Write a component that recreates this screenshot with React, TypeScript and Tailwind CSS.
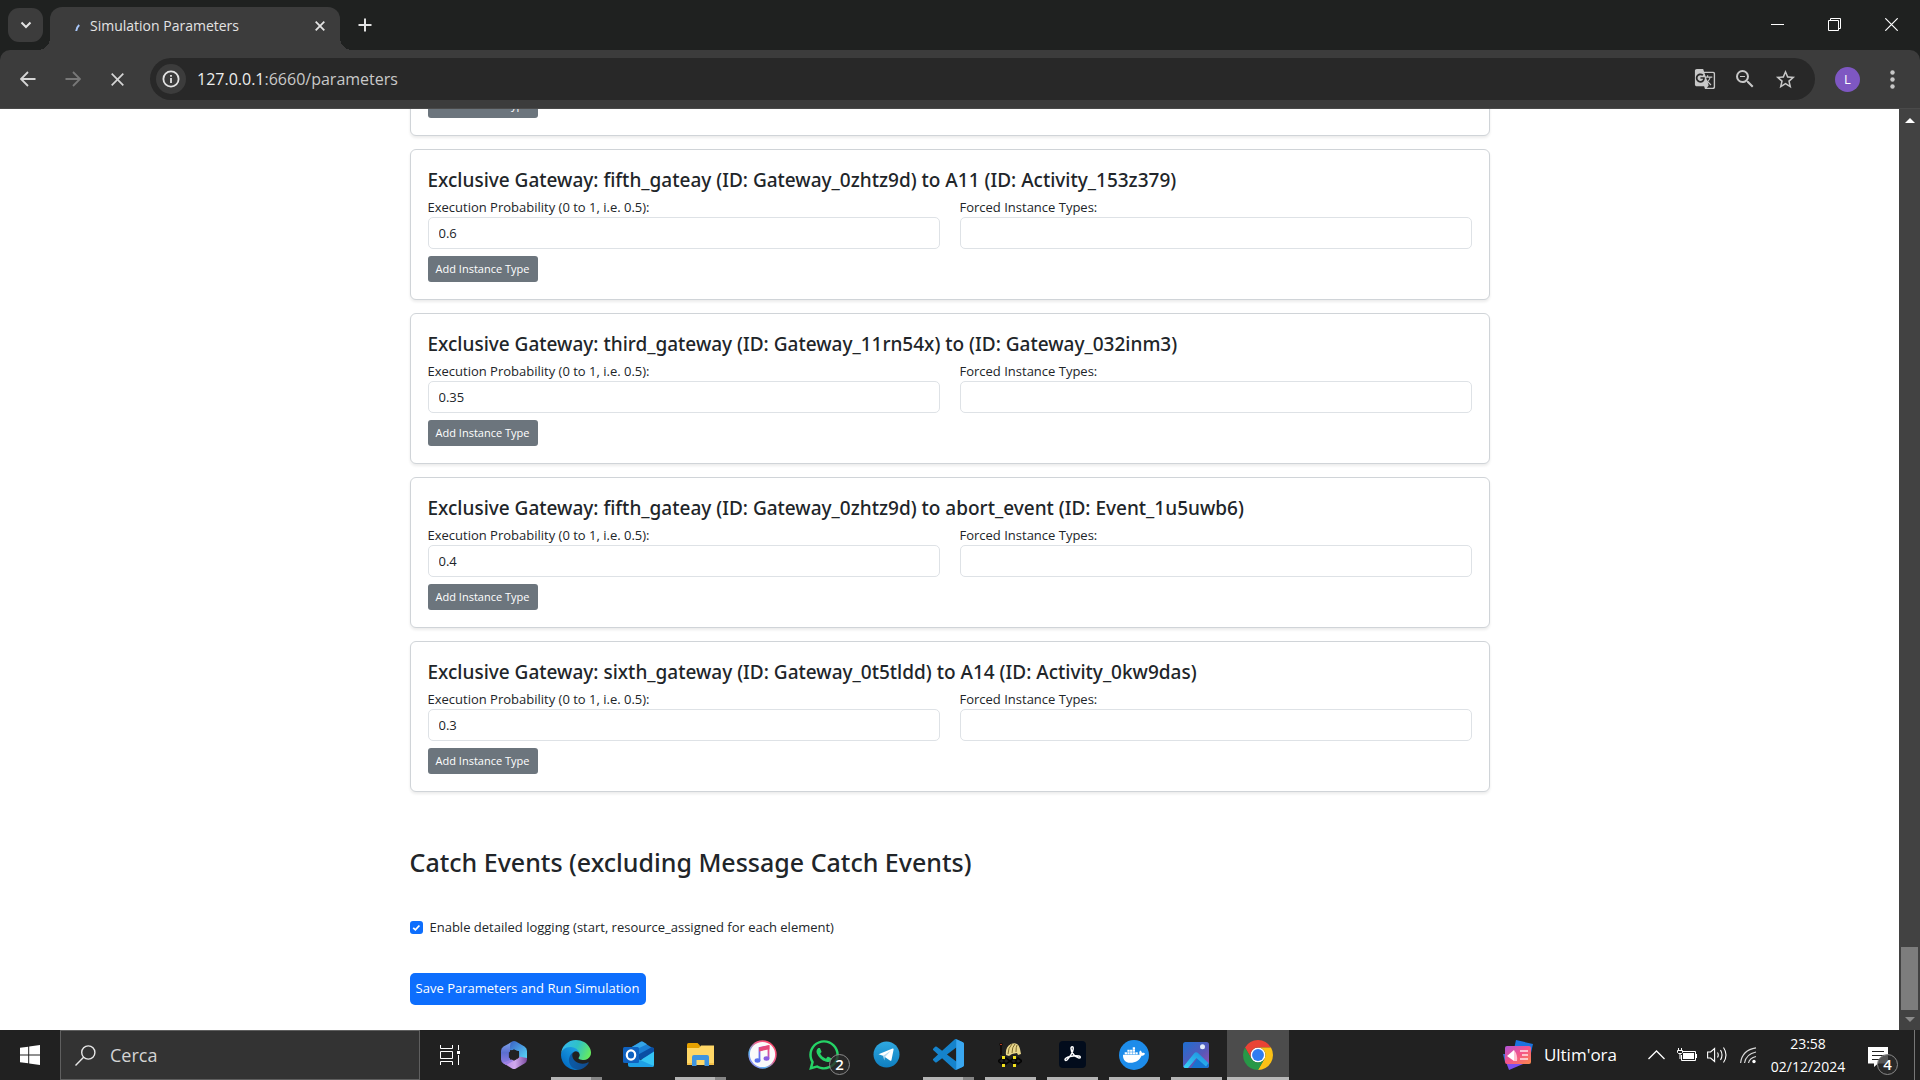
import React from "react";
import { FaWhatsapp, FaDocker } from "react-icons/fa";
import { MdGTranslate, MdZoomOut, MdStarBorder } from "react-icons/md";

type Gateway = { title: string; probability: string };

const gateways: Gateway[] = [
  { title: "Exclusive Gateway: fifth_gateay (ID: Gateway_0zhtz9d) to A11 (ID: Activity_153z379)", probability: "0.6" },
  { title: "Exclusive Gateway: third_gateway (ID: Gateway_11rn54x) to (ID: Gateway_032inm3)", probability: "0.35" },
  { title: "Exclusive Gateway: fifth_gateay (ID: Gateway_0zhtz9d) to abort_event (ID: Event_1u5uwb6)", probability: "0.4" },
  { title: "Exclusive Gateway: sixth_gateway (ID: Gateway_0t5tldd) to A14 (ID: Activity_0kw9das)", probability: "0.3" },
];

function AddButton() {
  return (
    <button className="block h-[26px] w-[110px] whitespace-nowrap rounded-[3px] bg-[#6c757d] text-center text-[11px] leading-[26px] text-white">
      Add Instance Type
    </button>
  );
}

function GatewayCard({ gateway, index }: { gateway: Gateway; index: number }) {
  return (
    <section className="rounded-[6px] border border-[#d0d4d8] bg-white px-[17px] pt-4 pb-[17px] shadow-[0_2px_3px_rgba(0,0,0,0.08)]">
      <h5 className="mb-1 whitespace-nowrap font-['Noto_Sans',sans-serif] text-[19px] font-medium leading-7">{gateway.title}</h5>
      <div className="grid grid-cols-2 gap-5">
        <div>
          <label htmlFor={`prob-${index}`} className="block leading-[19px]">Execution Probability (0 to 1, i.e. 0.5):</label>
          <input id={`prob-${index}`} defaultValue={gateway.probability} className="block h-8 w-full rounded-[5px] border border-[#dee2e6] bg-white px-2.5" />
        </div>
        <div>
          <label htmlFor={`forced-${index}`} className="block leading-[19px]">Forced Instance Types:</label>
          <input id={`forced-${index}`} className="block h-8 w-full rounded-[5px] border border-[#dee2e6] bg-white px-2.5" />
        </div>
      </div>
      <div className="mt-[7px]">
        <AddButton />
      </div>
    </section>
  );
}

function TabStrip() {
  return (
    <div className="flex h-[50px] items-end bg-[#1f2120] pl-2">
      <button aria-label="Search tabs" className="mb-2 flex h-[34px] w-[35px] items-center justify-center rounded-[11px] bg-[#3c3c3c]">
        <svg width="12" height="8" viewBox="0 0 12 8" fill="none" stroke="#e3e3e3" strokeWidth="2"><path d="M1.500 1.500 6 6l4.500-4.500" /></svg>
      </button>
      <span className="-ml-[5px] h-3 w-3 bg-[radial-gradient(circle_at_0_0,transparent_12px,#3c3c3c_12px)]" />
      <div className="flex h-[43px] w-[290px] items-center rounded-t-[12px] bg-[#3c3c3c] pr-[13px] pb-1.5 pl-[25px]">
        <svg className="mt-1" width="6" height="8" viewBox="0 0 6 8"><path d="M1.200 7 C1.500 4.500 2.500 2.500 4.200 1" stroke="#a8c7fa" strokeWidth="2" fill="none" /></svg>
        <span className="ml-[9px] flex-1 whitespace-nowrap text-[14px] text-[#e3e3e3]">Simulation Parameters</span>
        <button aria-label="Close tab" className="p-0.5">
          <svg width="10" height="10" viewBox="0 0 10 10" stroke="#e3e3e3" strokeWidth="1.800"><path d="M.7.7l8.600 8.600M9.300.7.7 9.300" /></svg>
        </button>
      </div>
      <span className="h-3 w-3 bg-[radial-gradient(circle_at_100%_0,transparent_12px,#3c3c3c_12px)]" />
      <button aria-label="New tab" className="mb-[18px] ml-1.5">
        <svg width="14" height="14" viewBox="0 0 14 14" stroke="#e3e3e3" strokeWidth="2"><path d="M7 .5v13M.5 7h13" /></svg>
      </button>
      <div className="mb-[19px] mr-[22px] ml-auto flex items-center gap-11">
        <button aria-label="Minimize"><svg width="13" height="13" viewBox="0 0 13 13" stroke="#fff"><path d="M0 6.500h13" /></svg></button>
        <button aria-label="Restore"><svg width="13" height="13" viewBox="0 0 13 13" stroke="#fff" fill="none"><path d="M.5 2.500h10v10H.5zM2.500 2.500v-2h10v10h-2" /></svg></button>
        <button aria-label="Close"><svg width="13" height="13" viewBox="0 0 13 13" stroke="#fff" strokeWidth="1.200"><path d="M.3.3l12.400 12.400M12.700.3.3 12.700" /></svg></button>
      </div>
    </div>
  );
}

function Toolbar() {
  return (
    <div className="bg-[#1f2120]">
      <div className="flex h-[59px] items-center rounded-t-[10px] border-b border-[#4a4a4a] bg-[#3c3c3c] pr-[25px] pl-5">
        <button aria-label="Back"><svg width="16" height="16" viewBox="0 0 16 16" fill="none" stroke="#d5d5d5" strokeWidth="1.800"><path d="M15.500 8H1.500M8 1 1 8l7 7" /></svg></button>
        <button aria-label="Forward" className="ml-[29px]"><svg width="16" height="16" viewBox="0 0 16 16" fill="none" stroke="#787878" strokeWidth="1.800"><path d="M.5 8h14M8 1l7 7-7 7" /></svg></button>
        <button aria-label="Stop" className="ml-[30px]"><svg width="13" height="13" viewBox="0 0 13 13" stroke="#d5d5d5" strokeWidth="1.700"><path d="M.7.7l11.600 11.600M12.300.7.7 12.300" /></svg></button>
        <div className="ml-[26px] flex h-[42px] flex-1 items-center rounded-full bg-[#282828] pr-2.5 pl-1.5">
          <button aria-label="Site information" className="flex h-[30px] w-[30px] items-center justify-center rounded-full bg-[#3c3c3c]">
            <svg width="18" height="18" viewBox="0 0 18 18" fill="none" stroke="#e3e3e3" strokeWidth="1.800"><circle cx="9" cy="9" r="7.600" /><path d="M9 8v5M9 5v1.800" /></svg>
          </button>
          <span className="ml-[11px] flex-1 text-[16px] text-[#c9c9c9]"><span className="text-[#ededed]">127.0.0.1</span>:6660/parameters</span>
          <div className="flex items-center text-[#c7c7c7]">
            <button aria-label="Translate" className="flex w-10 justify-center"><MdGTranslate size={22} /></button>
            <button aria-label="Zoom" className="flex w-10 justify-center"><MdZoomOut size={24} /></button>
            <button aria-label="Bookmark" className="flex w-10 justify-center"><MdStarBorder size={23} /></button>
          </div>
        </div>
        <button aria-label="Profile" className="ml-5 h-[25px] w-[25px] rounded-full bg-[#7e57c2] text-center text-[13px] leading-[25px] text-white">L</button>
        <button aria-label="Menu" className="ml-[30px]"><svg width="5" height="19" viewBox="0 0 5 19" fill="#c7c7c7"><circle cx="2.500" cy="2.500" r="2.200" /><circle cx="2.500" cy="9.500" r="2.200" /><circle cx="2.500" cy="16.500" r="2.200" /></svg></button>
      </div>
    </div>
  );
}

function Page() {
  return (
    <div className="flex min-h-0 flex-1 bg-white">
      <main className="min-w-0 flex-1 overflow-hidden text-[13px] text-[#212529]">
        <div className="mx-auto max-w-[1080px]">
          <div className="flex flex-col gap-[13px]">
            <section className="-mt-[18px] rounded-[6px] border border-[#d0d4d8] bg-white px-[17px] pb-[17px] shadow-[0_2px_3px_rgba(0,0,0,0.08)]">
              <AddButton />
            </section>
            {gateways.map((g, i) => <GatewayCard key={g.title} gateway={g} index={i} />)}
          </div>
          <h2 className="mt-[52px] font-['Noto_Sans',sans-serif] text-[25px] font-medium leading-9">Catch Events (excluding Message Catch Events)</h2>
          <div className="mt-[38px] flex items-center">
            <input id="logging" type="checkbox" defaultChecked className="h-[13px] w-[13px] appearance-none rounded-[3px] bg-[#0d6efd]" />
            <svg className="pointer-events-none -ml-[11px] h-[9px] w-[9px]" viewBox="0 0 9 9" fill="none" stroke="#fff" strokeWidth="1.800"><path d="m1.200 4.800 2.200 2 4-4.300" /></svg>
            <label htmlFor="logging" className="ml-[9px] leading-[19px]">Enable detailed logging (start, resource_assigned for each element)</label>
          </div>
          <button className="mt-9 block h-8 w-[236px] whitespace-nowrap rounded-[5px] bg-[#0d6efd] text-center text-white">Save Parameters and Run Simulation</button>
        </div>
      </main>
      <div className="flex w-[21px] flex-col items-center bg-[#424242] pt-[9px] pb-2">
        <svg width="10" height="5" viewBox="0 0 10 5" fill="#fff"><path d="M5 0l5 5H0z" /></svg>
        <div className="mt-auto mb-[7px] h-[63px] w-[17px] bg-[#7d7d7d]" />
        <svg width="10" height="5" viewBox="0 0 10 5" fill="#8a8a8a"><path d="M5 5 0 0h10z" /></svg>
      </div>
    </div>
  );
}

function M365Icon() {
  return (
    <svg width="26" height="28" viewBox="0 0 26 28">
      <defs>
        <linearGradient id="ma" x1="0" y1="0" x2="0" y2="1"><stop offset="0" stopColor="#7fa6ea" /><stop offset=".5" stopColor="#5b6ed0" /><stop offset="1" stopColor="#8d7be0" /></linearGradient>
        <linearGradient id="mb" x1="0" y1="0" x2="1" y2="1"><stop offset="0" stopColor="#3a62c4" /><stop offset=".5" stopColor="#4a9be0" /><stop offset="1" stopColor="#58daf8" /></linearGradient>
        <linearGradient id="mc" x1="0" y1="0" x2="1" y2="0"><stop offset="0" stopColor="#b78ae6" /><stop offset=".5" stopColor="#d0a9ee" /><stop offset="1" stopColor="#7a4a9e" /></linearGradient>
      </defs>
      <path d="M11 .8 2.500 5.500Q0 7 0 10v8.500Q0 21 2.500 22.500L9 19V10Z" fill="url(#ma)" />
      <path d="M11 .6Q13-.4 15 .6L23.500 5.500Q26 7 26 10v8l-8-2V10L9 9V5Q9 2 11 .6Z" fill="url(#mb)" />
      <path d="M2 22 18 15.500l8 1.500v1.500Q26 21 23.500 22.500L15 27.400q-2 1-4 0Z" fill="url(#mc)" />
      <path d="M2.500 22.500 9 18.500l4 1L5 24Z" fill="#9a80e4" />
      <path d="M13 8.800l4.600 2.600v5.200L13 19.200l-4.600-2.600v-5.200z" fill="#222" stroke="#222" strokeLinejoin="round" />
    </svg>
  );
}

function EdgeIcon() {
  return (
    <svg width="30" height="30" viewBox="0 0 256 256">
      <defs>
        <linearGradient id="ea" x1=".2" y1=".5" x2="1" y2=".5"><stop offset="0" stopColor="#0c59a4" /><stop offset="1" stopColor="#114a8b" /></linearGradient>
        <linearGradient id="eb" x1=".8" y1=".2" x2=".2" y2="1"><stop offset="0" stopColor="#1b9de2" /><stop offset="1" stopColor="#0067c0" /></linearGradient>
        <linearGradient id="ec" x1="0" y1=".3" x2="1" y2=".6"><stop offset="0" stopColor="#35b8f1" /><stop offset=".5" stopColor="#2fc2c6" /><stop offset="1" stopColor="#66eb5e" /></linearGradient>
      </defs>
      <path transform="translate(-4.630 -4.920)" fill="url(#ea)" d="M235.680 195.460a93.730 93.730 0 0 1-10.540 4.710 101.870 101.870 0 0 1-35.900 6.460c-47.320 0-88.540-32.550-88.540-74.320A31.480 31.480 0 0 1 117.130 105c-42.800 1.800-53.800 46.400-53.800 72.530 0 73.880 68.090 81.370 82.760 81.370 7.910 0 19.840-2.300 27-4.560l1.310-.44A128.340 128.340 0 0 0 241 201.100a4 4 0 0 0-5.320-5.640Z" />
      <path fill="url(#eb)" d="M105.730 241.290a79.200 79.200 0 0 1-22.740-21.340 80.720 80.720 0 0 1 29.490-120c3.120-1.470 8.450-4.130 15.540-4a32.350 32.350 0 0 1 25.690 13 31.880 31.880 0 0 1 6.360 18.660c0-.21 24.460-79.600-80-79.600-43.900 0-80 41.660-80 78.210a130.150 130.150 0 0 0 12.110 56 128 128 0 0 0 156.380 67.110 75.550 75.550 0 0 1-62.780-8Z" />
      <path fill="url(#ec)" d="M152.330 148.860c-.81 1.050-3.300 2.500-3.300 5.660 0 2.610 1.700 5.120 4.720 7.230 14.380 10 41.490 8.680 41.560 8.680a59.560 59.560 0 0 0 30.270-8.350A61.380 61.380 0 0 0 256 109.120c.26-22.410-8-37.310-11.340-43.910C223.460 23.790 177.720 0 128 0A128 128 0 0 0 0 126.200c.48-36.540 36.800-66.050 80-66.050 3.500 0 23.460.34 42 10.070 16.340 8.580 24.900 18.940 30.850 29.210 6.180 10.670 7.280 24.150 7.280 29.520s-2.740 13.330-7.800 19.910Z" />
    </svg>
  );
}

function OutlookIcon() {
  return (
    <svg width="31" height="27" viewBox="0 0 31 27">
      <path d="M7 7 17.500.8q1-.6 2 0L31 8v15L8 12z" fill="#1b7fd4" />
      <path d="M9 6 18 .8q1-.5 2 0l4 2.400L12 9z" fill="#34a5e8" />
      <path d="M31 7v5L15 20l-6-3L29 6z" fill="#0a4ea3" />
      <path d="M31 10.500V24q0 2-2 2H7z" fill="#35c5f5" />
      <path d="M5 16v8q0 2 2 2h22q1 0 1.700-1L15 18z" fill="#1ea0e6" />
      <rect x="0" y="6" width="16" height="16" rx="1.500" fill="#0f62c0" />
      <ellipse cx="8" cy="14" rx="4.200" ry="4.600" fill="none" stroke="#fff" strokeWidth="2.200" />
    </svg>
  );
}

function ExplorerIcon() {
  return (
    <svg width="29" height="26" viewBox="0 0 29 26">
      <path d="M1 2.500Q1 1 2.500 1h9l2.500 2.500V8H1z" fill="#e6a100" />
      <path d="M1 6h12l2-2.500h13V23H1z" fill="#ffd766" />
      <path d="M1 21h5v2H1zM23 21h5v2h-5z" fill="#f3c04a" />
      <path d="M6 24V15q0-2 2-2h13q2 0 2 2v9h-4.500v-6h-8v6z" fill="#3f95e0" />
    </svg>
  );
}

function MusicIcon() {
  return (
    <svg width="29" height="29" viewBox="0 0 29 29">
      <defs>
        <linearGradient id="mu" x1="0" y1="1" x2="1" y2="0"><stop offset="0" stopColor="#b26bf0" /><stop offset=".3" stopColor="#5fb8f2" /><stop offset=".6" stopColor="#f2618e" /><stop offset="1" stopColor="#fb3f5e" /></linearGradient>
        <linearGradient id="mn" x1="0" y1="1" x2="1" y2="0"><stop offset="0" stopColor="#4a7df0" /><stop offset=".5" stopColor="#a757d8" /><stop offset="1" stopColor="#fb4a68" /></linearGradient>
      </defs>
      <circle cx="14.500" cy="14.500" r="13.400" fill="#fafafa" stroke="url(#mu)" strokeWidth="1.600" />
      <path d="M11.500 20.500V8l9-2v12.500" fill="none" stroke="url(#mn)" strokeWidth="1.800" />
      <path d="M11 7.500 21.400 5.200v4L11 11.500z" fill="#e5487a" />
      <ellipse cx="9.500" cy="20.500" rx="2.900" ry="2.200" fill="#5a72ec" />
      <ellipse cx="18.500" cy="18.500" rx="2.900" ry="2.200" fill="#8a5ce0" />
    </svg>
  );
}

function CountBadge({ value }: { value: string }) {
  return (
    <span className="block h-[21px] w-[21px] rounded-full border border-[#8a8a8a] bg-[#2b2b2bcc] text-center text-[15px] font-semibold leading-[19px] text-white">
      {value}
    </span>
  );
}

function WhatsAppIcon() {
  return (
    <span className="relative block">
      <FaWhatsapp size={34} color="#25d366" />
      <span className="absolute top-4 left-[22px]"><CountBadge value="2" /></span>
    </span>
  );
}

function TelegramIcon() {
  return (
    <svg width="27" height="27" viewBox="0 0 27 27">
      <defs><linearGradient id="tg" x1="0" y1="0" x2="0" y2="1"><stop offset="0" stopColor="#2fa8e0" /><stop offset="1" stopColor="#0f7fc0" /></linearGradient></defs>
      <circle cx="13.500" cy="13.500" r="13" fill="url(#tg)" />
      <path d="M5.500 13.300 19.600 7.600q1.100-.3 1 1L18.500 19q-.4 1.300-1.600.6L10 14.800z" fill="#fff" />
      <path d="m10 14.800 7.800-5-6 6.400-.5 3.300z" fill="#b9dcf2" />
    </svg>
  );
}

function VsCodeIcon() {
  return (
    <svg width="31" height="31" viewBox="0 0 24 24">
      <path fill="#1583cc" d="M23.150 2.587L18.210.21a1.494 1.494 0 0 0-1.705.29l-9.460 8.630-4.120-3.128a.999.999 0 0 0-1.276.057L.327 7.261A1 1 0 0 0 .326 8.740L3.899 12 .326 15.260a1 1 0 0 0 .001 1.479L1.650 17.940a.999.999 0 0 0 1.276.057l4.120-3.128 9.460 8.630a1.492 1.492 0 0 0 1.704.29l4.942-2.377A1.500 1.500 0 0 0 24 20.060V3.939a1.500 1.500 0 0 0-.85-1.352zm-5.146 14.861L10.826 12l7.178-5.448v10.896z" />
      <path fill="#3aa7f0" d="M18 .2 23.150 2.600A1.500 1.500 0 0 1 24 4v16a1.500 1.500 0 0 1-.85 1.400L18 23.800z" />
    </svg>
  );
}

function HelmetIcon() {
  return (
    <svg width="24" height="26" viewBox="0 0 24 26">
      <path d="M1 2q2-2 4 0l-1 2v9H2V4z" fill="#120c0a" />
      <path d="M2 2.500h2" stroke="#b03a20" />
      <path d="M8 13Q7 5 13 2q7-3 9 5l1 5-3 1-1-2-5 1-3 2z" fill="#e8d68c" />
      <path d="M10 12q0-6 4-10M14 11q0-6 3-9M18 10q0-5 1-7" stroke="#7d6a2c" fill="none" />
      <path d="M0 19l4-3 2 2 2-2 4 3 4-3 2 2 2-2 4 3-4 3-2-2-2 2-4-3-4 3-2-2-2 2z" fill="none" stroke="#050505" strokeWidth="1.600" />
      <path d="M4 14h3v3H4zM15 14h3v3h-3zM4 22h3v3H4zM15 22h3v3h-3z" fill="#f2e21c" />
    </svg>
  );
}

function AcrobatIcon() {
  return (
    <svg width="27" height="27" viewBox="0 0 27 27">
      <rect width="27" height="27" rx="4" fill="#020c1c" />
      <path d="M12.500 6q2-1 1.700 2-.7 5-6.200 11-1.500 1-2-.3c0-2.500 9-4.700 14-3.700 2 .6 1.500 2.300-.2 2C16 16.500 12 11 12 7.500q0-1 .5-1.500z" fill="none" stroke="#fff" strokeWidth="1.500" />
    </svg>
  );
}

function DockerIcon() {
  return (
    <span className="flex h-[30px] w-[30px] items-center justify-center rounded-full bg-[#1d8cea]">
      <FaDocker size={22} color="#fff" />
    </span>
  );
}

function PhotosIcon() {
  return (
    <svg width="26" height="26" viewBox="0 0 26 26">
      <defs>
        <linearGradient id="pa" x1="0" y1="0" x2="1" y2="1"><stop offset="0" stopColor="#1d6fd0" /><stop offset=".6" stopColor="#5a57b8" /><stop offset="1" stopColor="#9a50b0" /></linearGradient>
        <linearGradient id="pb" x1="0" y1="1" x2="1" y2="0"><stop offset="0" stopColor="#38d6f8" /><stop offset="1" stopColor="#1a86dc" /></linearGradient>
      </defs>
      <rect width="26" height="26" rx="2.500" fill="url(#pa)" />
      <path d="M8 26 16 14l10 8v1.500Q26 26 23.500 26z" fill="#1673cf" />
      <path d="M.5 24.500 11 11.500q2-2.300 4.300-.3L25.500 21 23 24.500 13.500 16 5 26H2.500Q1 26 .5 24.500z" fill="url(#pb)" />
      <circle cx="19.500" cy="4.800" r="2.500" fill="#e4ecfb" />
    </svg>
  );
}

function ChromeIcon() {
  return (
    <svg width="30" height="30" viewBox="0 0 48 48">
      <circle cx="24" cy="24" r="12" fill="#fff" />
      <path fill="#ea4335" d="M24 12H44.780a24 24 0 0 0-41.560 0L13.610 30A12 12 0 0 1 24 12Z" />
      <path fill="#fbc116" d="M34.390 30 24 48A24 24 0 0 0 44.780 12H24A12 12 0 0 1 34.390 30Z" />
      <path fill="#279847" d="M13.610 30 3.220 12A24 24 0 0 0 24 48L34.390 30a12 12 0 0 1-20.780 0Z" />
      <circle cx="24" cy="24" r="9.500" fill="#2f7cf0" />
    </svg>
  );
}

type TaskApp = { name: string; icon: React.ReactNode; state: "idle" | "open" | "multi" | "active" };

const apps: TaskApp[] = [
  { name: "Microsoft 365", icon: <M365Icon />, state: "idle" },
  { name: "Edge", icon: <EdgeIcon />, state: "multi" },
  { name: "Outlook", icon: <OutlookIcon />, state: "idle" },
  { name: "Explorer", icon: <ExplorerIcon />, state: "multi" },
  { name: "Music", icon: <MusicIcon />, state: "idle" },
  { name: "WhatsApp", icon: <WhatsAppIcon />, state: "idle" },
  { name: "Telegram", icon: <TelegramIcon />, state: "idle" },
  { name: "Visual Studio Code", icon: <VsCodeIcon />, state: "multi" },
  { name: "Process tool", icon: <HelmetIcon />, state: "open" },
  { name: "Acrobat", icon: <AcrobatIcon />, state: "open" },
  { name: "Docker", icon: <DockerIcon />, state: "open" },
  { name: "Photos", icon: <PhotosIcon />, state: "open" },
  { name: "Chrome", icon: <ChromeIcon />, state: "active" },
];

function AppButton({ app }: { app: TaskApp }) {
  return (
    <button aria-label={app.name} className={app.state === "active" ? "flex h-full w-[62px] flex-col items-center bg-[#4c4c4c]" : "flex h-full w-[62px] flex-col items-center"}>
      <span className="flex flex-1 items-center justify-center pt-0.5">{app.icon}</span>
      {app.state === "multi" && (
        <span className="flex h-[3px] w-[51px]"><span className="flex-1 bg-[#b4b4b4]" /><span className="w-[11px] bg-[#858585]" /></span>
      )}
      {app.state === "open" && <span className="h-[3px] w-[51px] bg-[#b4b4b4]" />}
      {app.state === "active" && <span className="h-[3px] w-full bg-[#b8b8b8]" />}
      {app.state === "idle" && <span className="h-[3px]" />}
    </button>
  );
}

function NewsIcon() {
  return (
    <svg width="30" height="30" viewBox="0 0 30 30">
      <defs><linearGradient id="nw" x1="0" y1="0" x2="1" y2="1"><stop offset="0" stopColor="#b053d8" /><stop offset=".5" stopColor="#f4558a" /><stop offset="1" stopColor="#fb8a4a" /></linearGradient></defs>
      <path d="m13 0 17 4-4 18-17-4z" fill="#1a73e0" />
      <path d="M3 22h22l-19 8z" fill="#7b4ff0" />
      <path d="M0 14h3v8H2z" fill="#3a6fd0" />
      <rect x="2" y="6" width="26" height="18" rx="2" fill="url(#nw)" />
      <path d="M4 16l7-6v11z" fill="#fff" />
      <path d="M11 10q4 5 3 11l-3 0z" fill="#ffc3d4" />
      <path d="M17 11h8M19 15h6M17 19h8" stroke="#ffe6ea" strokeWidth="1.400" />
    </svg>
  );
}

function Taskbar() {
  return (
    <footer className="flex h-[50px] shrink-0 items-stretch bg-[#212121] text-white">
      <button aria-label="Start" className="flex w-[60px] items-center justify-center">
        <svg width="20" height="20" viewBox="0 0 20 20" fill="#fff"><path d="M0 2.800 8.200 1.700v7.800H0zM9.200 1.500 20 0v9.500H9.200zM0 10.500h8.200v7.800L0 17.200zM9.200 10.500H20V20L9.200 18.500z" /></svg>
      </button>
      <label className="flex w-[360px] items-center border border-[#5f5f5f] bg-[#333] pl-3.5">
        <svg width="21" height="21" viewBox="0 0 21 21" fill="none" stroke="#e8e8e8" strokeWidth="1.400"><circle cx="13.300" cy="7.500" r="6.600" /><path d="M8.600 12.200.5 20.400" /></svg>
        <input aria-label="Cerca" placeholder="Cerca" className="ml-3.5 w-[250px] bg-transparent text-[18px] placeholder:text-[#d4d4d4]" />
      </label>
      <button aria-label="Task view" className="flex w-[63px] items-center justify-center pr-[3px]">
        <svg width="21" height="20" viewBox="0 0 21 20" fill="none" stroke="#fff"><path d="M.5 0v3.500h12V0M.5 20v-3.500h12V20M.5 6.500h12v7H.5zM18.500 0v5M18.500 10v10" /><rect x="17" y="6" width="3" height="3" fill="#fff" stroke="none" /></svg>
      </button>
      <nav className="flex">{apps.map((a) => <AppButton key={a.name} app={a} />)}</nav>
      <div className="ml-auto flex items-center">
        <button className="flex items-center gap-[11px] text-[17px]"><NewsIcon />Ultim'ora</button>
        <button aria-label="Hidden icons" className="ml-[31px]"><svg width="17" height="10" viewBox="0 0 17 10" fill="none" stroke="#fff" strokeWidth="1.300"><path d="m.5 9 8-8 8 8" /></svg></button>
        <svg className="ml-3" width="20" height="14" viewBox="0 0 20 14" fill="none" stroke="#fff"><path d="M6 3.500h12.500v9h-14V7" /><rect x="6" y="5" width="11" height="6" fill="#fff" stroke="none" /><path d="M19.500 6v4M1.500 0v2M4.500 0v2M.5 2.500h5v2l-1 1h-3l-1-1zM3 6v5" /></svg>
        <svg className="ml-2.5" width="21" height="18" viewBox="0 0 21 18" fill="none" stroke="#fff" strokeWidth="1.100"><path d="M.6 6v6h3l4 3.500v-13L3.600 6zM10.500 6.500q1.500 2.500 0 5M13.500 4q3 5 0 10M16.500 1.500q5 7.500 0 15" /></svg>
        <svg className="ml-3" width="17" height="17" viewBox="0 0 17 17" fill="none" stroke="#d8d8d8" strokeWidth="1.200"><path d="M.6 16Q2 3 16 .8M4.500 16Q6 7 16 5M8.500 16Q9.500 11 16 9.500" /><circle cx="14" cy="14.500" r="1.700" fill="#fff" stroke="none" /></svg>
        <div className="ml-3 w-[78px] text-center text-[14px] leading-[23px]"><div>23:58</div><div>02/12/2024</div></div>
        <button aria-label="Notifications" className="relative ml-[21px] h-[30px] w-[30px]">
          <svg className="mt-[5px]" width="20" height="21" viewBox="0 0 20 21"><path d="M0 0h20v16.500H10L6 20v-3.500H0z" fill="#fff" /><path d="M4 4.500h12M4 8.500h12M4 12.500h8" stroke="#222" strokeWidth="1.200" /></svg>
          <span className="absolute top-3.5 left-[9px]"><CountBadge value="4" /></span>
        </button>
        <span className="ml-4 mr-[5px] h-[50px] w-px bg-[#777]" />
      </div>
    </footer>
  );
}

export default function App() {
  return (
    <div className="flex h-screen flex-col overflow-hidden font-['Open_Sans','Noto_Sans',sans-serif]">
      <TabStrip />
      <Toolbar />
      <Page />
      <Taskbar />
    </div>
  );
}
